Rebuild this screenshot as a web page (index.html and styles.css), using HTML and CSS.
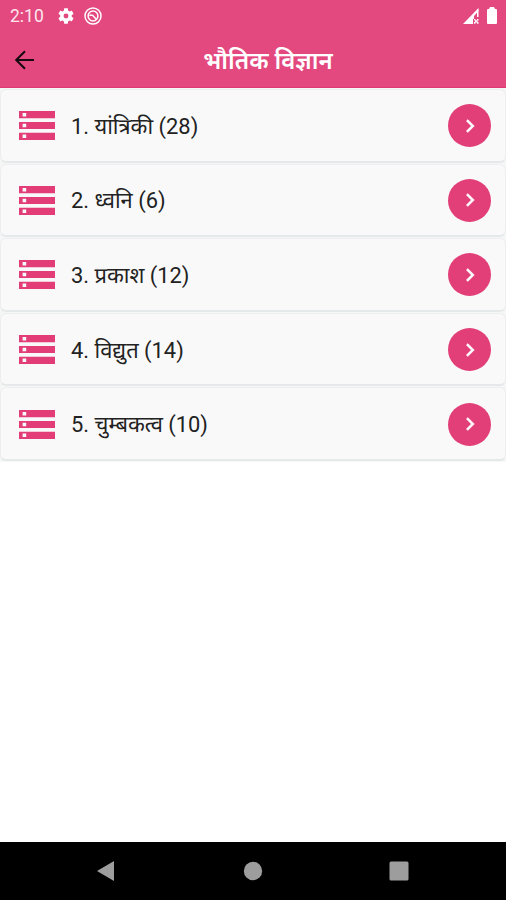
FILE: index.html
```html
<!DOCTYPE html>
<html lang="hi">
<head>
<meta charset="utf-8">
<title>भौतिक विज्ञान</title>
<link rel="stylesheet" href="styles.css">
</head>
<body>
<svg class="defs" aria-hidden="true">
  <symbol id="storage" viewBox="2 4 20 16"><path d="M2 20h20v-4H2v4zm2-3h2v2H4v-2zM2 4v4h20V4H2zm4 3H4V5h2v2zm-4 7h20v-4H2v4zm2-3h2v2H4v-2z"/></symbol>
  <symbol id="chevron" viewBox="0 0 24 24"><path d="M8.59 16.59 13.17 12 8.59 7.41 10 6l6 6-6 6z"/></symbol>
</svg>
<header class="header">
  <div class="status">
    <span class="clock">2:10</span>
    <svg class="gear" viewBox="2 2 20 20"><path d="M19.14 12.94c.04-.3.06-.61.06-.94 0-.32-.02-.64-.07-.94l2.03-1.58c.18-.14.23-.41.12-.61l-1.92-3.32c-.12-.22-.37-.29-.59-.22l-2.39.96c-.5-.38-1.03-.7-1.62-.94l-.36-2.54c-.04-.24-.24-.41-.48-.41h-3.84c-.24 0-.43.17-.47.41l-.36 2.54c-.59.24-1.13.57-1.62.94l-2.39-.96c-.22-.08-.47 0-.59.22L2.74 8.87c-.12.21-.08.47.12.61l2.03 1.58c-.05.3-.09.63-.09.94s.02.64.07.94l-2.03 1.58c-.18.14-.23.41-.12.61l1.92 3.32c.12.22.37.29.59.22l2.39-.96c.5.38 1.03.7 1.62.94l.36 2.54c.05.24.24.41.48.41h3.84c.24 0 .44-.17.47-.41l.36-2.54c.59-.24 1.13-.56 1.62-.94l2.39.96c.22.08.47 0 .59-.22l1.92-3.32c.12-.22.07-.47-.12-.61l-2.01-1.58zM12 15.1a3.1 3.1 0 1 1 0-6.2 3.1 3.1 0 0 1 0 6.2z"/></svg>
    <svg class="sync" viewBox="0 0 18 18"><circle cx="9" cy="9" r="8"/><circle cx="9" cy="9" r="4.9"/><path d="M5.4 8.2h3.2l3.6 4"/></svg>
    <svg class="signal" viewBox="0 0 16 16"><path d="M0 16 15.5 0v3L11 8v3h-1v5z"/><path d="M14 1.5h1.5V9H14zM11 11h1.5v1.2h1.5V11h1.5v1.5h-1V14h1v1.8H14v-1.3h-1.5v1.3H11V14h1v-1.5h-1z"/></svg>
    <svg class="battery" viewBox="0 0 10 17"><path d="M3 0h4l1 2h1q1 0 1 1v13q0 1-1 1H1q-1 0-1-1V3q0-1 1-1h1z"/></svg>
  </div>
  <div class="bar">
    <svg class="back" viewBox="0 0 20 20"><path d="M19 10H1.5M10 1.2 1.2 10l8.8 8.8"/></svg>
    <h1 class="title">भौतिक विज्ञान</h1>
  </div>
</header>
<main class="list">
  <div class="row"><svg class="storage"><use href="#storage"/></svg><span class="label">1. यांत्रिकी (28)</span><span class="go"><svg><use href="#chevron"/></svg></span></div>
  <div class="row"><svg class="storage"><use href="#storage"/></svg><span class="label">2. ध्वनि (6)</span><span class="go"><svg><use href="#chevron"/></svg></span></div>
  <div class="row"><svg class="storage"><use href="#storage"/></svg><span class="label">3. प्रकाश (12)</span><span class="go"><svg><use href="#chevron"/></svg></span></div>
  <div class="row"><svg class="storage"><use href="#storage"/></svg><span class="label">4. विद्युत (14)</span><span class="go"><svg><use href="#chevron"/></svg></span></div>
  <div class="row"><svg class="storage"><use href="#storage"/></svg><span class="label">5. चुम्बकत्व (10)</span><span class="go"><svg><use href="#chevron"/></svg></span></div>
</main>
<nav class="nav">
  <svg viewBox="0 0 20 22"><path d="M1 11 18 1v20z"/></svg>
  <svg viewBox="0 0 20 22"><circle cx="10" cy="11" r="9.2"/></svg>
  <svg viewBox="0 0 20 22"><rect x=".5" y="1.5" width="19" height="19" rx="1.5"/></svg>
</nav>
</body>
</html>
```
FILE: styles.css
```css
* { box-sizing: border-box; }
body {
  margin: 0;
  height: 900px;
  display: flex;
  flex-direction: column;
  overflow: hidden;
  background: #fff;
  font-family: Roboto, "Noto Sans", "Noto Sans Devanagari", sans-serif;
}
svg { display: block; flex: none; }
.defs { position: absolute; width: 0; height: 0; }
.header {
  flex: none;
  height: 88px;
  background: #e3497f;
  color: #fff;
  border-bottom: 1px solid #dc3a70;
}
.status {
  height: 31px;
  display: flex;
  align-items: center;
  padding: 0 9px 0 10px;
}
.status svg { fill: #fff; }
.clock { width: 48px; font-size: 17.5px; line-height: 31px; padding-top: 2px; color: #fde6ef; }
.gear { width: 16px; height: 16px; }
.status .sync { width: 18px; height: 18px; margin-left: 10px; fill: none; stroke: #fff; stroke-width: 1.5; }
.signal { width: 16px; height: 16px; margin-left: auto; }
.battery { width: 10px; height: 17px; margin-left: 8px; }
.bar {
  height: 57px;
  display: grid;
  grid-template-columns: 46px 1fr 16px;
  align-items: center;
}
.back {
  width: 20px;
  height: 20px;
  margin-left: 15px;
  fill: none;
  stroke: #160910;
  stroke-width: 2;
}
.title {
  margin: 0;
  padding-top: 2px;
  text-align: center;
  font-size: 24px;
  line-height: 32px;
  font-weight: 600;
}
.list {
  flex: none;
  display: flex;
  flex-direction: column;
  gap: 1px;
  padding: 1px 0;
  background: #f5f6f6;
}
.row {
  height: 73.6px;
  display: flex;
  align-items: center;
  padding: 1px 14px 0 18px;
  background: #f9f9f9;
  border: 1px solid #eceeef;
  border-bottom: 2px solid #e6e9ea;
  border-radius: 6px;
}
.storage { width: 36px; height: 29px; fill: #e23d77; }
.label {
  flex: 1;
  padding: 2px 0 0 16px;
  font-size: 21.9px;
  line-height: 34px;
  color: #222;
  white-space: nowrap;
}
.go {
  width: 43px;
  height: 43px;
  border-radius: 50%;
  background: #e23f78;
  display: grid;
  place-items: center;
}
.go svg { width: 26px; height: 26px; fill: #fff; stroke: #fff; stroke-width: .4; }
.nav {
  height: 58px;
  margin-top: auto;
  background: #000;
  display: flex;
  justify-content: space-between;
  align-items: center;
  padding: 0 97px 0 96px;
}
.nav svg { width: 20px; height: 22px; fill: #9d9d9d; }
```
